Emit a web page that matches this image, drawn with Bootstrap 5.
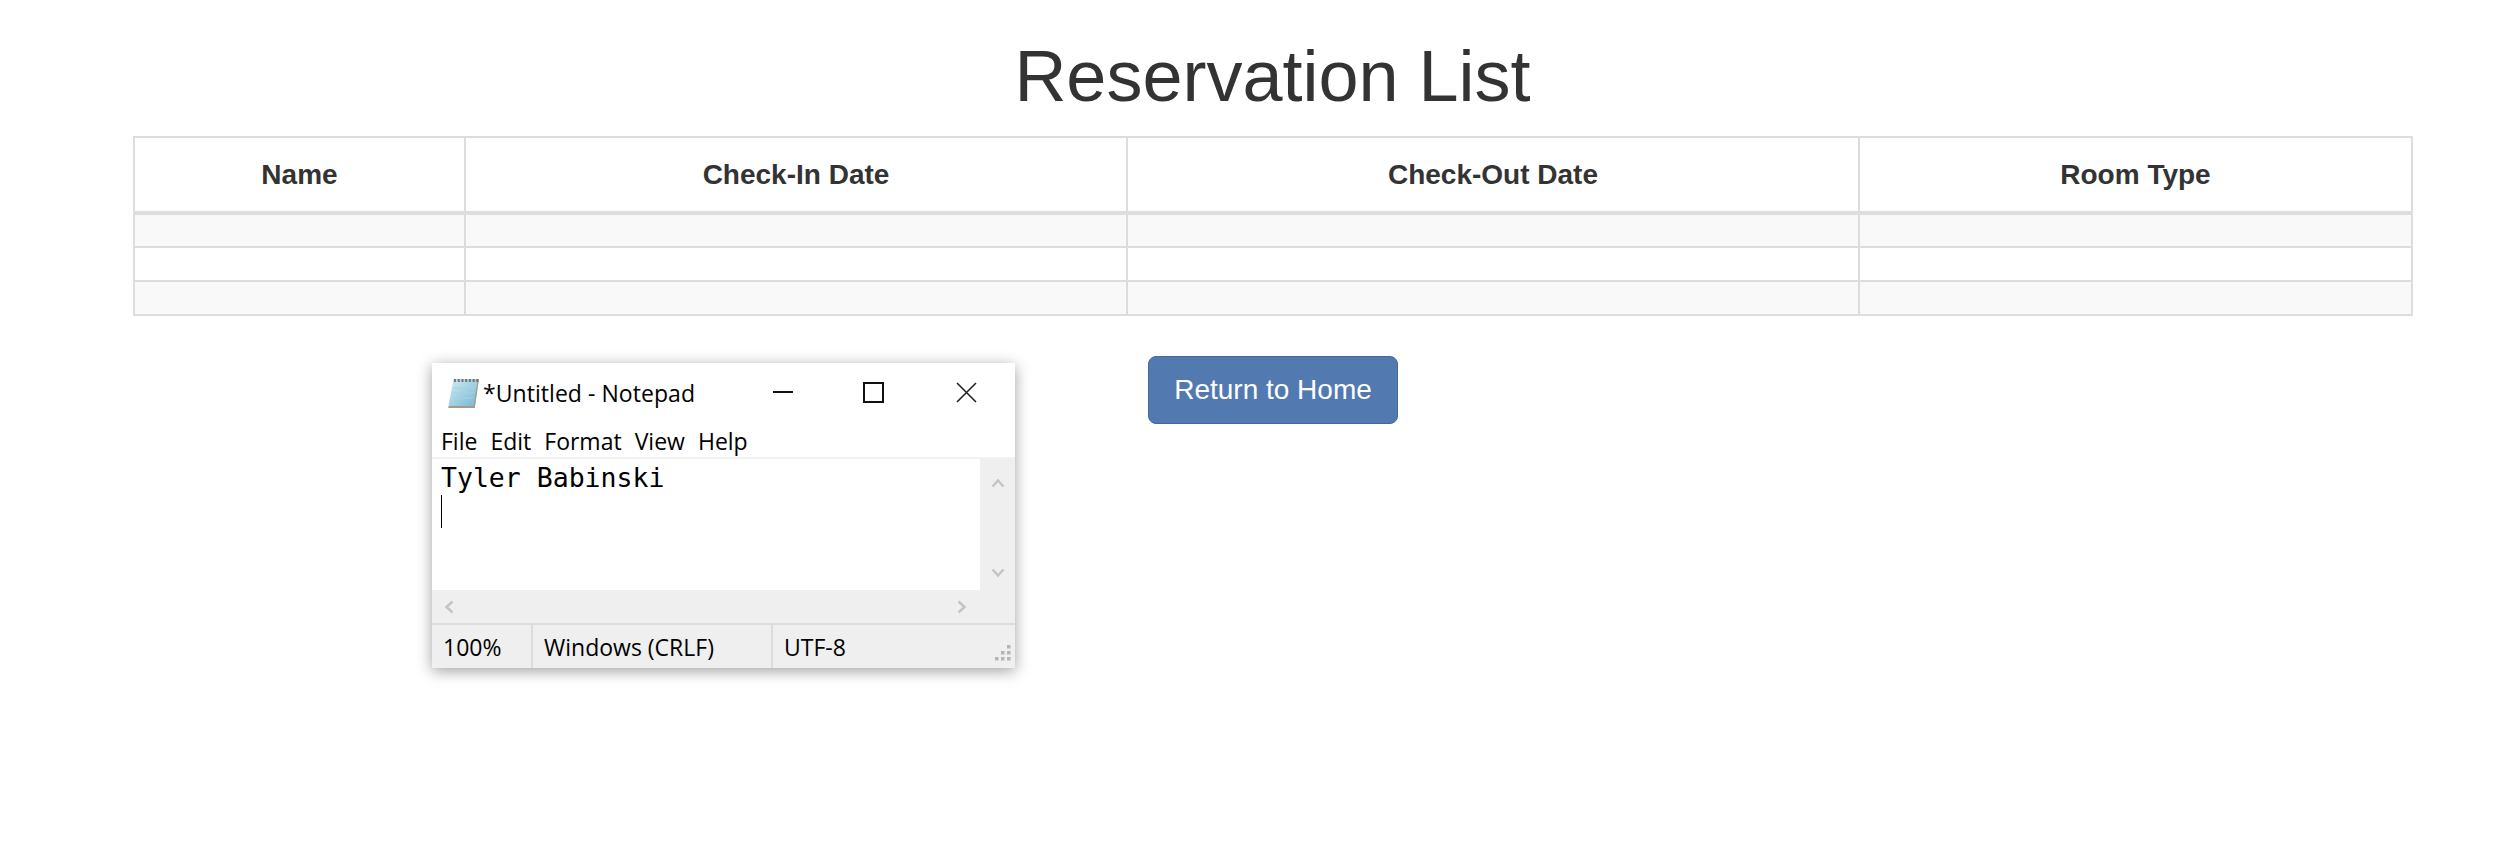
<!DOCTYPE html>
<html lang="en"><head><meta charset="utf-8"><title>Reservation List</title>
<link href="https://cdn.jsdelivr.net/npm/bootstrap@5.3.0/dist/css/bootstrap.min.css" rel="stylesheet">
<style>
body{font-family:"Liberation Sans",Arial,sans-serif;color:#333;background:#fff;position:relative;min-height:847px;overflow:hidden}
.page-wrap{padding:0 107px 0 133px}
.page-title{font-size:72px;line-height:80px;font-weight:400;text-align:center;margin:0;padding:36px 0 20px;color:#333}
.res-table{width:2278px;border-collapse:collapse;table-layout:fixed;margin:0;font-size:28px}
.res-table th,.res-table td{border:2px solid #ddd;padding:0;text-align:center}
.res-table thead th{height:76px;font-weight:700;border-bottom-width:4px;color:#333}
.res-table tbody td{height:34px}
.res-table tbody tr:nth-child(odd) td{background:#f9f9f9}
.home-row{padding-top:40px;display:flex;justify-content:center;width:2280px}
.home-btn{width:250px;height:68px;background:#527ab0;border:1px solid #44689b;border-radius:8px;color:#fff;font-size:28px;line-height:1;padding:0}
.home-btn:hover{background:#44689b;color:#fff}
.np-win{position:absolute;left:432px;top:363px;width:583px;height:305px;background:#fff;box-shadow:0 3px 14px rgba(0,0,0,.38);font-family:"Open Sans","Noto Sans",sans-serif;color:#000;font-size:23px;line-height:1;display:flex;flex-direction:column}
.np-title{height:60px;flex:none;display:flex;align-items:center;position:relative;padding-left:14px}
.np-title-text{margin-left:3px;letter-spacing:.05px}
.np-ctl{position:absolute;top:0;display:block}
.np-menu{height:36px;flex:none;display:flex;gap:13px;align-items:center;padding:3px 0 0 9px;border-bottom:2px solid #f2f2f2}
.np-body{height:131px;flex:none;display:flex}
.np-text{flex:1;padding:3px 9px;font-family:"DejaVu Sans Mono","Liberation Mono",monospace;font-size:26.500px;line-height:32px;position:relative;white-space:pre}
.np-caret{display:block;width:1px;height:33px;background:#000;margin-top:1px}
.np-vbar{width:35px;background:#efefef;display:flex;flex-direction:column;justify-content:space-between;align-items:center;padding:19px 0 12px}
.np-hbar{height:33px;flex:none;background:#efefef;display:flex;justify-content:space-between;align-items:center;padding:0 48px 0 12px}
.np-status{height:45px;flex:none;background:#efefef;display:flex;align-items:center;position:relative;border-top:2px solid #dcdcdc}
.np-cell{height:100%;display:flex;align-items:center;padding:2px 0 0 11px;border-right:2px solid #dcdcdc}
.np-grip{position:absolute;right:3px;bottom:6px}
</style></head>
<body>
<main class="page-wrap">
<h1 class="page-title">Reservation List</h1>
<table class="res-table">
<colgroup><col style="width:331px"><col style="width:662px"><col style="width:732px"><col style="width:553px"></colgroup>
<thead><tr><th>Name</th><th>Check-In Date</th><th>Check-Out Date</th><th>Room Type</th></tr></thead>
<tbody><tr><td></td><td></td><td></td><td></td></tr><tr><td></td><td></td><td></td><td></td></tr><tr><td></td><td></td><td></td><td></td></tr></tbody>
</table>
<div class="home-row"><a href="#" class="btn home-btn d-flex align-items-center justify-content-center">Return to Home</a></div>
</main>
<section class="np-win">
 <div class="np-title">
  <svg width="34" height="32" viewBox="0 0 32 32" preserveAspectRatio="none"><defs><linearGradient id="npg" x1="0" y1="0" x2="1" y2="1"><stop offset="0" stop-color="#d4edf5"/><stop offset="1" stop-color="#6fb3cf"/></linearGradient></defs><path d="M7 2h24l-4 29H2z" fill="url(#npg)"/><path d="M2 31h25l4-29-1 0-4 27H3z" fill="#a89a84"/><path d="M7.500 3.500h23" stroke="#777" stroke-width="3" stroke-dasharray="2 1.500"/><path d="M7 11h21M6 16h21M5 21h21" stroke="#a5d2e2" stroke-width="1"/></svg>
  <span class="np-title-text">*Untitled - Notepad</span>
  <svg class="np-ctl" style="left:339px" width="26" height="58" viewBox="0 0 26 58"><path d="M2 29h20" stroke="#111" stroke-width="2"/></svg>
  <svg class="np-ctl" style="left:429px" width="26" height="58" viewBox="0 0 26 58"><rect x="3" y="20" width="19" height="19" fill="none" stroke="#111" stroke-width="2"/></svg>
  <svg class="np-ctl" style="left:522px" width="26" height="58" viewBox="0 0 26 58"><path d="M3 20l19 19M22 20L3 39" stroke="#222" stroke-width="1.600"/></svg>
 </div>
 <div class="np-menu"><span>File</span><span>Edit</span><span>Format</span><span>View</span><span>Help</span></div>
 <div class="np-body">
  <div class="np-text">Tyler Babinski<span class="np-caret"></span></div>
  <div class="np-vbar">
   <svg width="14" height="10" viewBox="0 0 14 10"><path d="M1.500 8.500L7 2.500l5.500 6" fill="none" stroke="#c4c4c4" stroke-width="2.400"/></svg>
   <svg width="14" height="10" viewBox="0 0 14 10"><path d="M1.500 1.500L7 7.500l5.500-6" fill="none" stroke="#c4c4c4" stroke-width="2.400"/></svg>
  </div>
 </div>
 <div class="np-hbar">
  <svg width="10" height="14" viewBox="0 0 10 14"><path d="M8.500 1.500L2.500 7l6 5.500" fill="none" stroke="#c4c4c4" stroke-width="2.400"/></svg>
  <svg width="10" height="14" viewBox="0 0 10 14"><path d="M1.500 1.500L7.500 7l-6 5.500" fill="none" stroke="#c4c4c4" stroke-width="2.400"/></svg>
 </div>
 <div class="np-status">
  <div class="np-cell" style="width:101px">100%</div>
  <div class="np-cell" style="width:240px">Windows (CRLF)</div>
  <div class="np-cell border-0">UTF-8</div>
  <svg class="np-grip" width="18" height="18" viewBox="0 0 18 18" fill="#b5b5b5"><rect x="13" y="1" width="3.500" height="3.500"/><rect x="13" y="7" width="3.500" height="3.500"/><rect x="7" y="7" width="3.500" height="3.500"/><rect x="13" y="13" width="3.500" height="3.500"/><rect x="7" y="13" width="3.500" height="3.500"/><rect x="1" y="13" width="3.500" height="3.500"/></svg>
 </div>
</section>
<script src="https://cdn.jsdelivr.net/npm/bootstrap@5.3.0/dist/js/bootstrap.bundle.min.js"></script>
</body></html>
